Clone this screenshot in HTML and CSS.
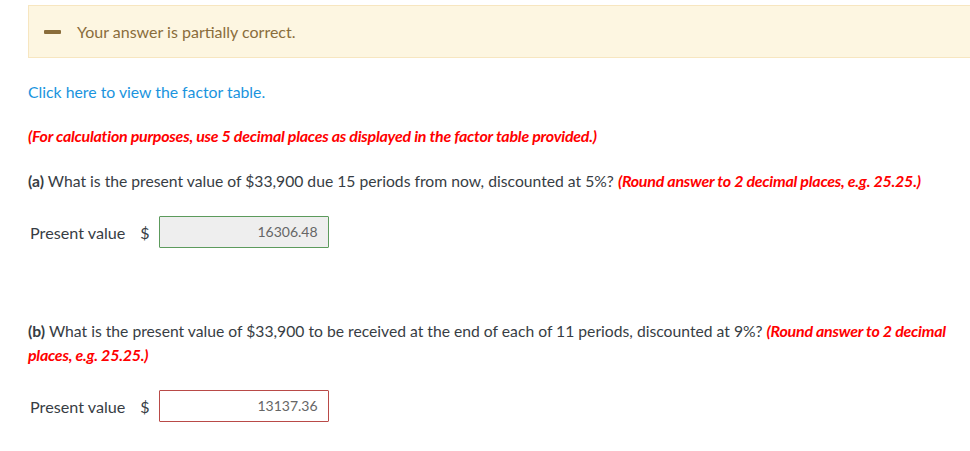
FILE: index.html
```html
<!DOCTYPE html>
<html>
<head>
<meta charset="utf-8">
<link rel="stylesheet" href="styles.css">
</head>
<body>
<div class="page">
  <div class="banner">
    <span class="dash"></span>
    <span class="banner-text">Your answer is partially correct.</span>
  </div>
  <a class="link" href="#">Click here to view the factor table.</a>
  <p class="note">(For calculation purposes, use 5 decimal places as displayed in the factor table provided.)</p>
  <p class="question"><b>(a)</b> What is the present value of $33,900 due 15 periods from now, discounted at 5%? <em class="note-inline">(Round answer to 2 decimal places, e.g. 25.25.)</em></p>
  <div class="answer">
    <span class="label">Present value</span>
    <span class="cur">$</span>
    <span class="field correct">16306.48</span>
  </div>
  <p class="question qb"><b>(b)</b> What is the present value of $33,900 to be received at the end of each of 11 periods, discounted at 9%? <em class="note-inline">(Round answer to 2 decimal places, e.g. 25.25.)</em></p>
  <div class="answer">
    <span class="label">Present value</span>
    <span class="cur">$</span>
    <span class="field wrong">13137.36</span>
  </div>
</div>
</body>
</html>
```
FILE: styles.css
```css
html, body {
  margin: 0;
  padding: 0;
  background: #fff;
}
body {
  font-family: Lato, "Open Sans", sans-serif;
  font-size: 16px;
  color: #373d44;
}
.page {
  padding: 5px 0 0 28px;
}
.banner {
  display: flex;
  align-items: center;
  height: 51px;
  background: #fdf6e1;
  border: 1px solid #f7e6c0;
  border-right: none;
  padding-left: 15px;
  gap: 16px;
}
.dash {
  width: 17px;
  height: 4px;
  border-radius: 1px;
  background: #8a6d3b;
}
.banner-text {
  color: #8a6d3b;
  font-size: 16px;
}
.link {
  display: block;
  margin-top: 24px;
  color: #1a94de;
  text-decoration: none;
  line-height: 20px;
  font-size: 15.8px;
}
.note {
  margin: 24px 0 0;
  color: #ff0000;
  font-weight: bold;
  font-style: italic;
  letter-spacing: -0.25px;
  line-height: 20px;
}
.question {
  margin: 23px 0 0;
  line-height: 24px;
  padding-right: 12px;
  font-size: 15.7px;
}
.question b {
  font-weight: bold;
}
.note-inline {
  color: #ff0000;
  font-weight: bold;
  font-style: italic;
  font-size: 16px;
  letter-spacing: -0.25px;
}
.answer {
  display: flex;
  align-items: center;
  margin-top: 23px;
  padding-left: 2px;
}
.label {
  font-size: 16.2px;
}
.cur {
  margin-left: 15px;
  margin-right: 9px;
}
.field {
  box-sizing: border-box;
  width: 170px;
  height: 32px;
  line-height: 30px;
  text-align: right;
  padding-right: 10px;
  font-size: 14px;
  color: #666;
  border-radius: 1px;
}
.correct {
  background: #eeeeee;
  border: 1px solid #5c9a5c;
}
.wrong {
  background: #fff;
  border: 1px solid #b94a48;
}
.qb {
  margin-top: 71px;
}
```
